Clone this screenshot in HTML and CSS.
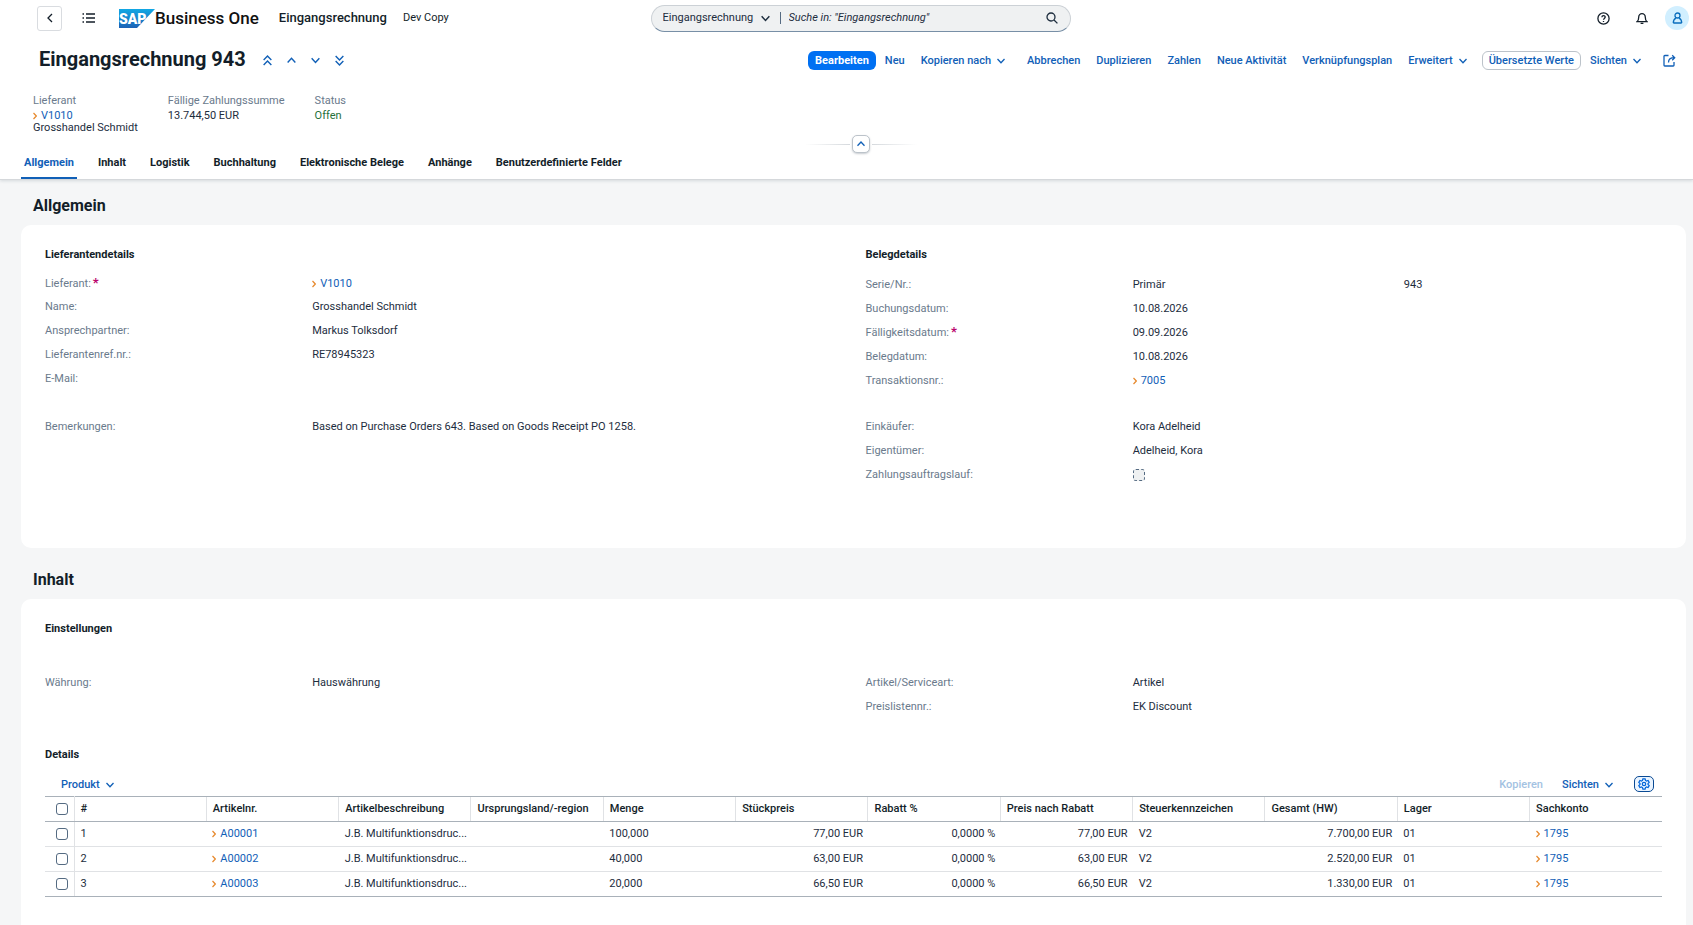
FILE: index.html
```html
<!DOCTYPE html>
<html lang="de">
<head>
<meta charset="utf-8">
<meta name="viewport" content="width=device-width, initial-scale=1">
<title>Eingangsrechnung 943</title>
<link rel="stylesheet" href="styles.css">
</head>
<body>
<svg class="defs" aria-hidden="true">
  <symbol id="down" viewBox="0 0 10 10"><path d="M1.500 3 5 6.800 8.500 3"/></symbol>
  <symbol id="up" viewBox="0 0 10 10"><path d="M1.500 6.800 5 3l3.500 3.800"/></symbol>
  <symbol id="up2" viewBox="0 0 10 10"><path d="M1.500 4.500 5 1l3.500 3.500M1.500 9 5 5.500 8.500 9"/></symbol>
  <symbol id="down2" viewBox="0 0 10 10"><path d="M1.500 1 5 4.500 8.500 1M1.500 5.500 5 9l3.500-3.500"/></symbol>
  <symbol id="drill" viewBox="0 0 4 8"><path d="M.5 1 3.300 4 .5 7"/></symbol>
</svg>
<div class="page">
  <header class="head">
    <div class="shell">
      <div class="shell-left">
        <button class="back" aria-label="Zurück"><svg width="10" height="12" viewBox="0 0 10 12"><path d="M7 2 3 6l4 4"/></svg></button>
        <button class="plain menu" aria-label="Menü"><svg width="14" height="12" viewBox="0 0 14 12"><path d="M4 2h9M4 6h9M4 10h9M.5 2H2M.5 6H2M.5 10H2"/></svg></button>
        <a class="brand" href="#">
          <svg class="logo" width="36" height="19" viewBox="0 0 36 19">
            <defs><linearGradient id="sap" x1="0" y1="0" x2="0" y2="1"><stop offset="0" stop-color="#12a8e4"/><stop offset="1" stop-color="#1b62b6"/></linearGradient></defs>
            <path d="M0 0h36L18 19H0z" fill="url(#sap)"/>
            <text x="0" y="15" class="logo-text">SAP</text>
          </svg>
          <span>Business One</span>
        </a>
        <span class="app">Eingangsrechnung</span>
        <span class="env">Dev Copy</span>
      </div>
      <form class="search">
        <span class="scope">
          <select aria-label="Suchbereich"><option>Eingangsrechnung</option></select>
          <svg class="i" width="11" height="11"><use href="#down"/></svg>
        </span>
        <input type="text" placeholder="Suche in: &quot;Eingangsrechnung&quot;" aria-label="Suche">
        <button class="plain" type="button" aria-label="Suchen"><svg width="12" height="12" viewBox="0 0 12 12"><circle cx="5" cy="5" r="4"/><path d="m8 8 3.400 3.400"/></svg></button>
      </form>
      <div class="shell-right">
        <button class="plain help" aria-label="Hilfe"><svg width="13" height="13" viewBox="0 0 13 13"><circle cx="6.500" cy="6.500" r="5.600"/><path d="M4.900 5.200c0-2.200 3.300-2.200 3.300-.1 0 1.300-1.700 1.300-1.700 2.600M6.500 8.900v1.200"/></svg></button>
        <button class="plain bell" aria-label="Mitteilungen"><svg width="12" height="13" viewBox="0 0 12 13"><path d="M1 9.700c1.500-1 1.700-2.500 1.700-4.500a3.300 3.600 0 0 1 6.600 0c0 2 .2 3.500 1.700 4.500zM4.600 11.400h2.800"/></svg></button>
        <button class="avatar" aria-label="Benutzer"><svg width="11" height="12" viewBox="0 0 11 12"><circle cx="5.500" cy="3.500" r="2.500"/><path d="M1.300 11c0-2.800.9-4 2.700-4.800M9.700 11c0-2.800-.9-4-2.700-4.800M1.300 11h8.400"/></svg></button>
      </div>
    </div>

    <div class="titlebar">
      <h1>Eingangsrechnung 943</h1>
      <nav class="pager" aria-label="Datensätze">
        <button class="plain" aria-label="Erster"><svg class="i" width="11" height="11"><use href="#up2"/></svg></button>
        <button class="plain" aria-label="Vorheriger"><svg class="i" width="11" height="11"><use href="#up"/></svg></button>
        <button class="plain" aria-label="Nächster"><svg class="i" width="11" height="11"><use href="#down"/></svg></button>
        <button class="plain" aria-label="Letzter"><svg class="i" width="11" height="11"><use href="#down2"/></svg></button>
      </nav>
      <div class="actions">
        <button class="btn primary">Bearbeiten</button>
        <button class="btn">Neu</button>
        <button class="btn drop">Kopieren nach<svg class="i" width="10" height="10"><use href="#down"/></svg></button>
        <button class="btn">Abbrechen</button>
        <button class="btn">Duplizieren</button>
        <button class="btn">Zahlen</button>
        <button class="btn">Neue Aktivität</button>
        <button class="btn">Verknüpfungsplan</button>
        <button class="btn drop">Erweitert<svg class="i" width="10" height="10"><use href="#down"/></svg></button>
        <button class="btn outlined">Übersetzte Werte</button>
        <button class="btn drop">Sichten<svg class="i" width="10" height="10"><use href="#down"/></svg></button>
        <button class="plain share" aria-label="Teilen"><svg width="13" height="13" viewBox="0 0 13 13"><path d="M5.500 1.500H1.800a.8.800 0 0 0-.8.800v8.900c0 .4.400.8.800.8h8.400c.4 0 .8-.4.800-.8V8M5.500 8.500c0-3 1.500-4.800 6-4.800M9.200 1.200l2.500 2.500-2.500 2.500"/></svg></button>
      </div>
    </div>

    <div class="facets">
      <div class="facet"><span class="label">Lieferant</span><a class="drill" href="#"><svg class="i" width="4" height="8"><use href="#drill"/></svg>V1010</a><span class="sub">Grosshandel Schmidt</span></div>
      <div class="facet"><span class="label">Fällige Zahlungssumme</span><span>13.744,50 EUR</span></div>
      <div class="facet"><span class="label">Status</span><span class="ok">Offen</span></div>
    </div>

    <div class="collapse"><button aria-label="Kopfbereich ausblenden"><svg class="i" width="10" height="10"><use href="#up"/></svg></button></div>

    <nav class="tabs">
      <a class="active" href="#allgemein">Allgemein</a>
      <a href="#inhalt">Inhalt</a>
      <a href="#">Logistik</a>
      <a href="#">Buchhaltung</a>
      <a href="#">Elektronische Belege</a>
      <a href="#">Anhänge</a>
      <a href="#">Benutzerdefinierte Felder</a>
    </nav>
  </header>

  <main>
    <h2 id="allgemein">Allgemein</h2>
    <section class="card general">
      <div class="columns">
        <div>
          <h3>Lieferantendetails</h3>
          <div class="field short"><span class="label">Lieferant:<b class="req">*</b></span><a class="drill" href="#"><svg class="i" width="4" height="8"><use href="#drill"/></svg>V1010</a></div>
          <div class="field"><span class="label">Name:</span><span>Grosshandel Schmidt</span></div>
          <div class="field"><span class="label">Ansprechpartner:</span><span>Markus Tolksdorf</span></div>
          <div class="field"><span class="label">Lieferantenref.nr.:</span><span>RE78945323</span></div>
          <div class="field"><span class="label">E-Mail:</span><span></span></div>
          <div class="field apart"><span class="label">Bemerkungen:</span><span class="wide">Based on Purchase Orders 643. Based on Goods Receipt PO 1258.</span></div>
        </div>
        <div>
          <h3>Belegdetails</h3>
          <div class="field"><span class="label">Serie/Nr.:</span><span>Primär</span><span>943</span></div>
          <div class="field"><span class="label">Buchungsdatum:</span><span>10.08.2026</span></div>
          <div class="field"><span class="label">Fälligkeitsdatum:<b class="req">*</b></span><span>09.09.2026</span></div>
          <div class="field"><span class="label">Belegdatum:</span><span>10.08.2026</span></div>
          <div class="field"><span class="label">Transaktionsnr.:</span><a class="drill" href="#"><svg class="i" width="4" height="8"><use href="#drill"/></svg>7005</a></div>
          <div class="field apart tight"><span class="label">Einkäufer:</span><span>Kora Adelheid</span></div>
          <div class="field"><span class="label">Eigentümer:</span><span>Adelheid, Kora</span></div>
          <div class="field"><label class="label" for="run">Zahlungsauftragslauf:</label><input class="check readonly" id="run" type="checkbox" disabled></div>
        </div>
      </div>
    </section>

    <h2 class="later" id="inhalt">Inhalt</h2>
    <section class="card content">
      <h3>Einstellungen</h3>
      <div class="columns settings">
        <div>
          <div class="field"><span class="label">Währung:</span><span>Hauswährung</span></div>
        </div>
        <div>
          <div class="field"><span class="label">Artikel/Serviceart:</span><span>Artikel</span></div>
          <div class="field"><span class="label">Preislistennr.:</span><span>EK Discount</span></div>
        </div>
      </div>
      <h3>Details</h3>
      <div class="tablebar">
        <button class="btn drop">Produkt<svg class="i" width="10" height="10"><use href="#down"/></svg></button>
        <div class="tabletools">
          <button class="btn" disabled>Kopieren</button>
          <button class="btn drop">Sichten<svg class="i" width="10" height="10"><use href="#down"/></svg></button>
          <button class="gear" aria-label="Einstellungen"><svg width="12" height="12" viewBox="0 0 12 12"><path d="M4.900.8h2.200l.4 1.600 1 .6 1.600-.5 1.100 1.900-1.200 1.100v1l1.200 1.100-1.100 1.900-1.600-.5-1 .6-.4 1.600H4.900l-.4-1.600-1-.6-1.600.5L.8 7.600 2 6.500v-1L.8 4.400l1.100-1.900 1.600.5 1-.6z"/><circle cx="6" cy="6" r="1.700"/></svg></button>
        </div>
      </div>
      <table>
        <colgroup><col class="c-check"><col span="12"></colgroup>
        <thead>
          <tr><th class="sel"><input class="check" type="checkbox" aria-label="Alle auswählen"></th><th>#</th><th>Artikelnr.</th><th>Artikelbeschreibung</th><th>Ursprungsland/-region</th><th>Menge</th><th>Stückpreis</th><th>Rabatt %</th><th>Preis nach Rabatt</th><th>Steuerkennzeichen</th><th>Gesamt (HW)</th><th>Lager</th><th>Sachkonto</th></tr>
        </thead>
        <tbody>
          <tr><td class="sel"><input class="check" type="checkbox" aria-label="Zeile 1"></td><td>1</td><td><a class="drill" href="#"><svg class="i" width="4" height="8"><use href="#drill"/></svg>A00001</a></td><td>J.B. Multifunktionsdruc...</td><td></td><td>100,000</td><td class="num">77,00 EUR</td><td class="num">0,0000 %</td><td class="num">77,00 EUR</td><td>V2</td><td class="num">7.700,00 EUR</td><td>01</td><td><a class="drill" href="#"><svg class="i" width="4" height="8"><use href="#drill"/></svg>1795</a></td></tr>
          <tr><td class="sel"><input class="check" type="checkbox" aria-label="Zeile 2"></td><td>2</td><td><a class="drill" href="#"><svg class="i" width="4" height="8"><use href="#drill"/></svg>A00002</a></td><td>J.B. Multifunktionsdruc...</td><td></td><td>40,000</td><td class="num">63,00 EUR</td><td class="num">0,0000 %</td><td class="num">63,00 EUR</td><td>V2</td><td class="num">2.520,00 EUR</td><td>01</td><td><a class="drill" href="#"><svg class="i" width="4" height="8"><use href="#drill"/></svg>1795</a></td></tr>
          <tr><td class="sel"><input class="check" type="checkbox" aria-label="Zeile 3"></td><td>3</td><td><a class="drill" href="#"><svg class="i" width="4" height="8"><use href="#drill"/></svg>A00003</a></td><td>J.B. Multifunktionsdruc...</td><td></td><td>20,000</td><td class="num">66,50 EUR</td><td class="num">0,0000 %</td><td class="num">66,50 EUR</td><td>V2</td><td class="num">1.330,00 EUR</td><td>01</td><td><a class="drill" href="#"><svg class="i" width="4" height="8"><use href="#drill"/></svg>1795</a></td></tr>
        </tbody>
      </table>
    </section>
  </main>
</div>
</body>
</html>
```

FILE: styles.css
```css
:root {
  --text: #1d2d3e;
  --strong: #131e29;
  --label: #6a7a8c;
  --link: #1160b7;
  --line: #a9b1b9;
  --faint: #e0e2e5;
}

* { box-sizing: border-box; }

body {
  margin: 0;
  background: #f5f6f7;
  color: var(--text);
  font: 11px/12px Roboto, "Liberation Sans", sans-serif;
}

button, input, select { font: inherit; color: inherit; margin: 0; }
button { cursor: pointer; }
a { color: var(--link); text-decoration: none; }
h1, h2, h3 { margin: 0; color: var(--strong); }

svg { display: block; flex: none; fill: none; stroke: currentColor; stroke-width: 1.3; }
.i { overflow: visible; }
.defs { width: 0; height: 0; position: absolute; }

.plain {
  display: flex;
  align-items: center;
  justify-content: center;
  padding: 0;
  border: 0;
  background: none;
}

.page { min-height: 100vh; display: flex; flex-direction: column; }

/* Header */
.head {
  background: #fff;
  border-bottom: 1px solid #d5d8db;
  box-shadow: 0 1px 3px rgba(34, 53, 72, .15);
}

.shell {
  display: grid;
  grid-template-columns: 1fr 420px 1fr;
  align-items: center;
  height: 36px;
  padding: 0 4px;
}

.shell-left { display: flex; align-items: center; white-space: nowrap; padding-left: 33px; }
.shell-right { display: flex; align-items: center; justify-content: flex-end; color: var(--strong); }
.search { margin-left: 14px; margin-right: -14px; }

.back {
  display: flex;
  align-items: center;
  justify-content: center;
  width: 25px;
  height: 25px;
  padding: 0;
  border: 1px solid #d9dce0;
  border-radius: 3px;
  background: #fff;
  color: var(--strong);
}

.menu { margin: 0 23px 0 20px; color: var(--strong); }
.brand { display: flex; align-items: center; color: #111; font-size: 17px; line-height: 20px; font-weight: 500; }
.logo { stroke: none; }
.logo-text { fill: #fff; font-size: 14px; font-weight: 900; }
.app { margin-left: 20px; color: var(--strong); font-size: 13px; line-height: 16px; font-weight: 500; }
.env { margin-left: 16px; color: var(--strong); }

.search {
  display: flex;
  align-items: center;
  height: 27px;
  padding: 0 12px 0 11px;
  border: 1px solid #ccd1d6;
  border-bottom-color: #788fa6;
  border-radius: 14px;
  background: #eff1f2;
}

.scope {
  display: flex;
  align-items: center;
  justify-content: space-between;
  width: 118px;
  padding-right: 9px;
  border-right: 1px solid #556b82;
}

.scope select { appearance: none; border: 0; padding: 0; background: none; }
.search input {
  flex: 1;
  min-width: 0;
  padding: 0 8px;
  border: 0;
  outline: 0;
  background: none;
  font-style: italic;
}
.search input::placeholder { color: var(--text); opacity: 1; }

.bell { margin: 0 17px 0 26px; }
.avatar {
  display: flex;
  align-items: center;
  justify-content: center;
  width: 24px;
  height: 24px;
  padding: 0;
  border: 0;
  border-radius: 50%;
  background: #d1efff;
  color: #0a6ebd;
}

.titlebar { display: flex; align-items: center; height: 48px; padding: 0 17px 0 39px; }
h1 { padding-bottom: 2px; font-size: 20px; line-height: 24px; font-weight: 700; white-space: nowrap; }
.pager { display: flex; gap: 13px; margin-left: 16px; color: var(--link); }

.actions { display: flex; align-items: center; margin-left: auto; gap: 2px; }
.btn {
  display: flex;
  align-items: center;
  gap: 5px;
  height: 19px;
  padding: 1px 6px 0;
  border: 1px solid transparent;
  border-radius: 6px;
  background: none;
  color: var(--link);
  font-weight: 500;
  white-space: nowrap;
}
.drop { padding-right: 11px; }
.primary { background: #0070f2; color: #fff; font-weight: 700; }
.outlined { border-color: #bcc3ca; }
.btn:disabled { color: #a3c2e2; }
.share { margin-left: 7px; color: var(--link); }

.facets { display: flex; padding: 11px 33px 0; gap: 30px; }
.facet { display: flex; flex-direction: column; white-space: nowrap; line-height: 12px; }
.facet .label { margin-bottom: 3px; }
.ok { color: #256f3a; }
.label { color: var(--label); }

.drill { display: inline-flex; align-items: center; gap: 4px; }
.drill svg { color: #e78a2e; stroke-width: 1.2; }

.collapse {
  display: flex;
  align-items: center;
  justify-content: center;
  gap: 2px;
  margin-top: 1px;
  margin-left: 29px;
}
.collapse::before, .collapse::after {
  content: "";
  width: 45px;
  height: 1px;
  background: linear-gradient(to right, transparent, #d5d9dd);
}
.collapse::after { background: linear-gradient(to left, transparent, #d5d9dd); }
.collapse button {
  display: flex;
  align-items: center;
  justify-content: center;
  width: 18px;
  height: 18px;
  padding: 0;
  border: 1px solid #bcc3ca;
  border-radius: 5px;
  background: #fff;
  box-shadow: 0 1px 2px rgba(34, 53, 72, .25);
  color: var(--link);
}

.tabs { display: flex; gap: 18px; padding: 0 21px; }
.tabs a {
  padding: 4px 3px 8px;
  border-bottom: 2px solid transparent;
  color: var(--strong);
  font-weight: 700;
  white-space: nowrap;
}
.tabs .active { color: var(--link); border-color: var(--link); }

/* Sections */
main { flex: 1; display: flex; flex-direction: column; padding: 0 7px 0 21px; }
h2 { padding: 16px 12px 9px; font-size: 16px; line-height: 20px; font-weight: 700; }
.later { padding-top: 22px; }
h3 { font-size: 11px; line-height: 12px; font-weight: 700; }

.card { padding: 24px; background: #fff; border-radius: 10px; }
.general { padding-bottom: 61px; }
.content { flex: 1; border-radius: 10px 10px 0 0; }
.general h3 { margin-bottom: 12px; }

.columns { display: grid; grid-template-columns: 1fr 1fr; gap: 24px; }
.field {
  display: grid;
  grid-template-columns: 267fr 271fr 258fr;
  align-items: center;
  height: 24px;
}
.short { height: 22px; }
.apart { margin-top: 24px; }
.tight { margin-top: 22px; }
.wide { grid-column: span 2; }
.req { color: #ba066c; font-size: 13px; line-height: 10px; margin-left: 2px; }
.settings { margin: 36px 0 30px; }

.check {
  appearance: none;
  display: block;
  width: 12px;
  height: 12px;
  border: 1px solid #556b82;
  border-radius: 3px;
  background: #fff;
}
.readonly { border-style: dashed; background: #eff1f2; }

/* Items table */
.tablebar { display: flex; justify-content: space-between; align-items: center; height: 35px; padding: 11px 8px 0 9px; }
.tabletools { display: flex; align-items: center; gap: 5px; }
.gear {
  display: flex;
  align-items: center;
  justify-content: center;
  width: 20px;
  height: 16px;
  margin-left: 3px;
  padding: 0;
  border: 1px solid #0a4a94;
  border-radius: 5px;
  background: #eaf4ff;
  color: #0064d9;
}
.gear svg { stroke-width: 1.2; }

table { width: 100%; border-collapse: collapse; table-layout: fixed; }
.c-check { width: 29px; }
th, td {
  height: 25px;
  padding: 0 5px 0 6px;
  border-bottom: 1px solid var(--faint);
  text-align: left;
  font-weight: 400;
  white-space: nowrap;
  overflow: hidden;
}
th { border-top: 1px solid var(--line); border-bottom-color: var(--line); color: var(--strong); font-weight: 500; border-left: 1px solid var(--faint); }
th:first-child { border-left: 0; }
.sel { padding: 0 0 0 11px; border-right: 1px solid var(--faint); }
.num { text-align: right; }
tbody tr:last-child td { border-bottom-color: var(--line); }
```
